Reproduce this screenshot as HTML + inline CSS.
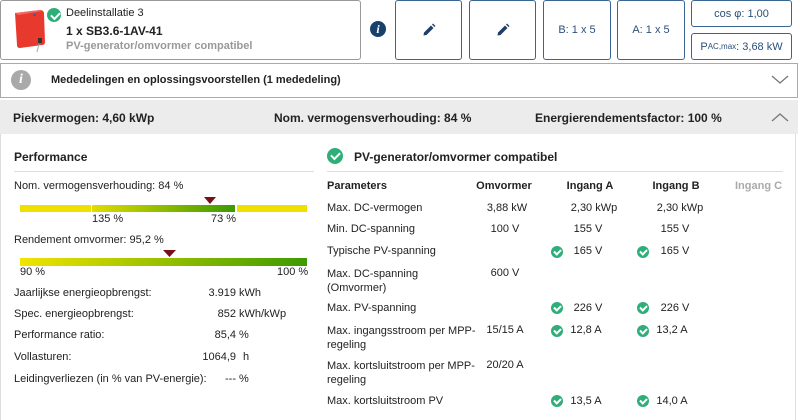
<!DOCTYPE html>
<html><head><meta charset="utf-8"><style>
*{box-sizing:border-box;margin:0;padding:0}
body{width:800px;height:420px;overflow:hidden;background:#fff;font-family:"Liberation Sans",Arial,sans-serif;font-size:11px;color:#222;position:relative}
.a{position:absolute;white-space:nowrap}
.btn{position:absolute;border:1px solid #3a6590;border-radius:3px;color:#2a4f78;display:flex;align-items:center;justify-content:center;font-size:11px}
.chk{position:absolute;width:12px;height:12px;border-radius:50%;background:#2fae7a}
.chk:after{content:"";position:absolute;left:3px;top:3px;width:5px;height:3px;border-left:2px solid #fff;border-bottom:2px solid #fff;transform:rotate(-45deg)}
.big:after{left:4px;top:4px;width:7px;height:4px}
.c{text-align:center}
.r{text-align:right}
</style></head><body>
<div class="a" style="left:0;top:0;width:361px;height:60px;border:1px solid #999;border-radius:3px"></div>
<svg class="a" style="left:12px;top:8px" width="38" height="44" viewBox="0 0 38 44">
<path d="M3 5 L28 2 Q32 2 32 6 L33 34 Q33 37 30 37 L8 40 Q5 40 5 37 Z" fill="#e8392e"/>
<path d="M3 5 L28 2 L30 3 L6 7 Z" fill="#f26a5e"/>
<rect x="21" y="6" width="3" height="2" fill="#3060c0"/>
<rect x="26" y="30" width="4" height="5" fill="#333"/>
<line x1="27" y1="36" x2="25" y2="44" stroke="#aaa" stroke-width="1"/>
</svg>
<div class="chk big" style="left:47px;top:8px;width:14px;height:14px"></div>
<div class="a" style="left:66px;top:7px">Deelinstallatie 3</div>
<div class="a" style="left:66px;top:24px;font-weight:bold;font-size:12px">1 x SB3.6-1AV-41</div>
<div class="a" style="left:66px;top:40px;font-weight:bold;color:#999">PV-generator/omvormer compatibel</div>
<div class="a" style="left:370px;top:21px;width:16px;height:16px;border-radius:50%;background:#17406b;color:#fff;font:italic bold 12px 'Liberation Serif',serif;text-align:center;line-height:16px">i</div>
<div class="btn" style="left:395px;top:0;width:67px;height:60px"><svg width="14" height="14" viewBox="0 0 14 14"><path d="M1.5 12.5 L2 9.5 L9 2.5 L11.5 5 L4.5 12 Z M10 1.5 L11 0.5 L13.5 3 L12.5 4 Z" fill="#1f3f66"/></svg></div>
<div class="btn" style="left:469px;top:0;width:67px;height:60px"><svg width="14" height="14" viewBox="0 0 14 14"><path d="M1.5 12.5 L2 9.5 L9 2.5 L11.5 5 L4.5 12 Z M10 1.5 L11 0.5 L13.5 3 L12.5 4 Z" fill="#1f3f66"/></svg></div>
<div class="btn" style="left:543px;top:0;width:68px;height:60px">B: 1 x 5</div>
<div class="btn" style="left:617px;top:0;width:68px;height:60px">A: 1 x 5</div>
<div class="btn" style="left:691px;top:0;width:101px;height:27px">cos φ: 1,00</div>
<div class="btn" style="left:691px;top:33px;width:101px;height:27px">P<sub style="font-size:8px">AC,max</sub>: 3,68 kW</div>
<div class="a" style="left:0;top:63px;width:798px;height:35px;border:1px solid #aaa"></div>
<div class="a" style="left:11px;top:70px;width:20px;height:20px;border-radius:50%;background:#a9a9a9;color:#fff;font:italic bold 14px 'Liberation Serif',serif;text-align:center;line-height:20px">i</div>
<div class="a" style="left:51px;top:74px;font-weight:bold">Mededelingen en oplossingsvoorstellen (1 mededeling)</div>
<svg class="a" style="left:771px;top:75px" width="18" height="10"><path d="M1 1 L9 8 L17 1" fill="none" stroke="#777" stroke-width="1.3"/></svg>
<div class="a" style="left:0;top:100px;width:798px;height:34px;background:#ececec"></div>
<div class="a" style="left:13px;top:111px;font-weight:bold;font-size:12px">Piekvermogen: 4,60 kWp</div>
<div class="a" style="left:274px;top:111px;font-weight:bold;font-size:12px">Nom. vermogensverhouding: 84 %</div>
<div class="a" style="left:535px;top:111px;font-weight:bold;font-size:12px">Energierendementsfactor: 100 %</div>
<svg class="a" style="left:771px;top:112px" width="18" height="10"><path d="M1 9 L9 2 L17 9" fill="none" stroke="#777" stroke-width="1.3"/></svg>
<div class="a" style="left:0;top:134px;width:1px;height:286px;background:#ddd"></div>
<div class="a" style="left:795px;top:134px;width:1px;height:286px;background:#ddd"></div>
<div class="a" style="left:14px;top:150px;font-weight:bold;font-size:12px">Performance</div>
<div class="a" style="left:14px;top:171px;width:300px;height:1px;background:#ddd"></div>
<div class="a" style="left:14px;top:180px">Nom. vermogensverhouding: 84 %</div>
<div class="a" style="left:20px;top:205px;width:71px;height:7px;background:#f0e000"></div>
<div class="a" style="left:92px;top:205px;width:143px;height:7px;background:linear-gradient(to right,#e0dc00,#3c9a00)"></div>
<div class="a" style="left:237px;top:205px;width:70px;height:7px;background:#f0e000"></div>
<svg class="a" style="left:204px;top:197px" width="12" height="7"><path d="M0 0 L12 0 L6 7 Z" fill="#7a0f1a"/></svg>
<div class="a" style="left:92px;top:213px">135 %</div>
<div class="a" style="left:211px;top:213px">73 %</div>
<div class="a" style="left:14px;top:234px">Rendement omvormer: 95,2 %</div>
<div class="a" style="left:20px;top:258px;width:287px;height:8px;background:linear-gradient(to right,#f2e400,#3c9a00)"></div>
<svg class="a" style="left:163px;top:250px" width="13" height="7"><path d="M0 0 L13 0 L6.5 7 Z" fill="#7a0f1a"/></svg>
<div class="a" style="left:20px;top:266px">90 %</div>
<div class="a" style="left:277px;top:266px">100 %</div>
<div class="a" style="left:14px;top:287px">Jaarlijkse energieopbrengst:</div><div class="a r" style="left:180px;width:56px;top:287px">3.919</div><div class="a" style="left:239px;top:287px">kWh</div>
<div class="a" style="left:14px;top:308px">Spec. energieopbrengst:</div><div class="a r" style="left:180px;width:56px;top:308px">852</div><div class="a" style="left:239px;top:308px">kWh/kWp</div>
<div class="a" style="left:14px;top:329px">Performance ratio:</div><div class="a r" style="left:180px;width:56px;top:329px">85,4</div><div class="a" style="left:239px;top:329px">%</div>
<div class="a" style="left:14px;top:351px">Vollasturen:</div><div class="a r" style="left:180px;width:56px;top:351px">1064,9</div><div class="a" style="left:243px;top:351px">h</div>
<div class="a" style="left:14px;top:373px">Leidingverliezen (in % van PV-energie):</div><div class="a r" style="left:180px;width:56px;top:373px">---</div><div class="a" style="left:239px;top:373px">%</div>
<div class="chk big" style="left:327px;top:148px;width:16px;height:16px"></div>
<div class="a" style="left:354px;top:150px;font-weight:bold;font-size:12px">PV-generator/omvormer compatibel</div>
<div class="a" style="left:327px;top:171px;width:456px;height:1px;background:#ddd"></div>
<div class="a" style="left:327px;top:180px;font-weight:bold">Parameters</div>
<div class="a c" style="left:464px;width:80px;top:180px;font-weight:bold">Omvormer</div>
<div class="a c" style="left:550px;width:80px;top:180px;font-weight:bold">Ingang A</div>
<div class="a c" style="left:636px;width:80px;top:180px;font-weight:bold">Ingang B</div>
<div class="a" style="left:735px;top:180px;font-weight:bold;color:#aaa">Ingang C</div>

<div class="a" style="left:327px;top:202px">Max. DC-vermogen</div><div class="a c" style="left:467px;width:80px;top:202px">3,88 kW</div><div class="a c" style="left:559px;width:70px;top:202px">2,30 kWp</div><div class="a c" style="left:645px;width:70px;top:202px">2,30 kWp</div>
<div class="a" style="left:327px;top:223px">Min. DC-spanning</div><div class="a c" style="left:465px;width:80px;top:223px">100 V</div><div class="a c" style="left:563px;width:50px;top:223px">155 V</div><div class="a c" style="left:650px;width:50px;top:223px">155 V</div>
<div class="a" style="left:327px;top:245px">Typische PV-spanning</div><div class="chk" style="left:551px;top:246px"></div><div class="a c" style="left:563px;width:50px;top:245px">165 V</div><div class="chk" style="left:637px;top:246px"></div><div class="a c" style="left:650px;width:50px;top:245px">165 V</div>
<div class="a" style="left:327px;top:267px;line-height:14px">Max. DC-spanning<br>(Omvormer)</div><div class="a c" style="left:465px;width:80px;top:267px">600 V</div>
<div class="a" style="left:327px;top:302px">Max. PV-spanning</div><div class="chk" style="left:551px;top:302px"></div><div class="a c" style="left:563px;width:50px;top:302px">226 V</div><div class="chk" style="left:637px;top:302px"></div><div class="a c" style="left:650px;width:50px;top:302px">226 V</div>
<div class="a" style="left:327px;top:324px;line-height:14px">Max. ingangsstroom per MPP-<br>regeling</div><div class="a c" style="left:465px;width:80px;top:324px">15/15 A</div><div class="chk" style="left:551px;top:325px"></div><div class="a c" style="left:561px;width:50px;top:324px">12,8 A</div><div class="chk" style="left:637px;top:325px"></div><div class="a c" style="left:647px;width:50px;top:324px">13,2 A</div>
<div class="a" style="left:327px;top:359px;line-height:14px">Max. kortsluitstroom per MPP-<br>regeling</div><div class="a c" style="left:465px;width:80px;top:359px">20/20 A</div>
<div class="a" style="left:327px;top:395px">Max. kortsluitstroom PV</div><div class="chk" style="left:551px;top:395px"></div><div class="a c" style="left:561px;width:50px;top:395px">13,5 A</div><div class="chk" style="left:637px;top:395px"></div><div class="a c" style="left:647px;width:50px;top:395px">14,0 A</div>
</body></html>
